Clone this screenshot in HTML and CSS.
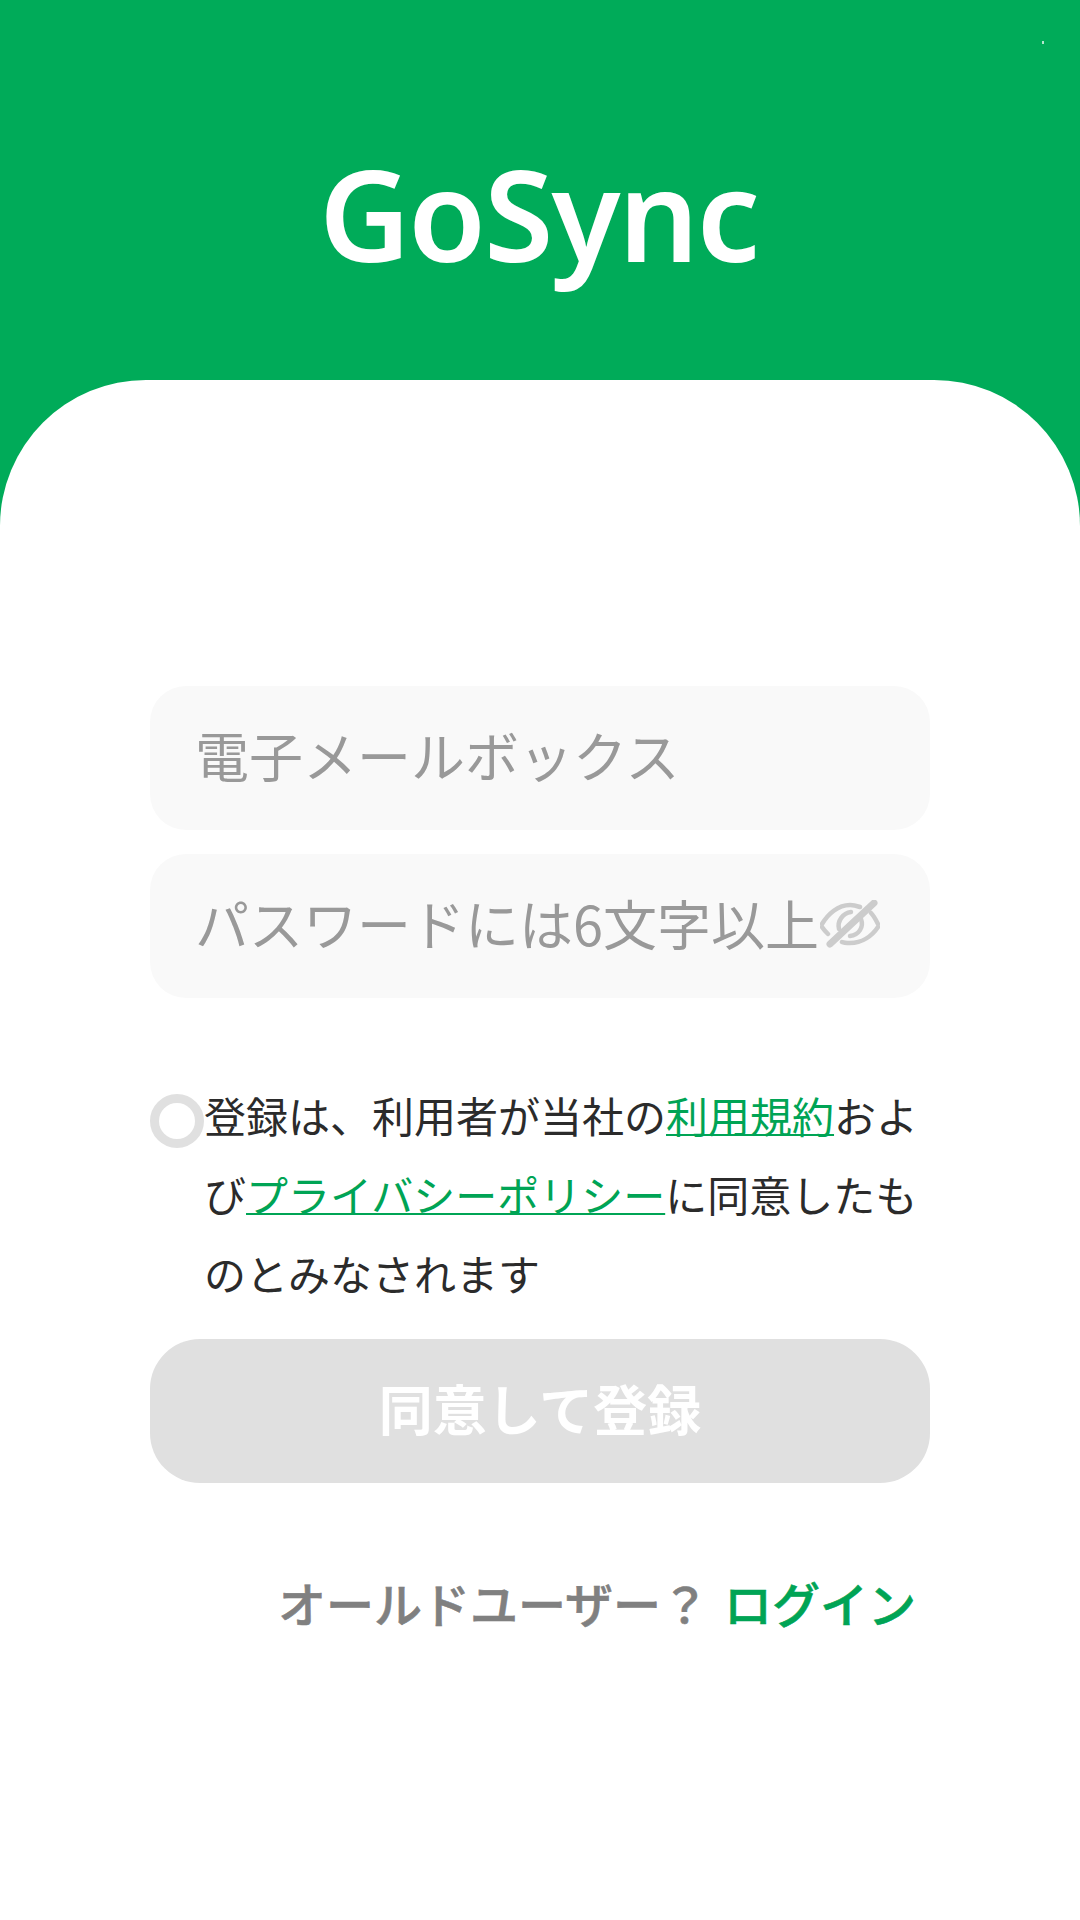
FILE: index.html
```html
<!DOCTYPE html>
<html lang="ja">
<head>
    <meta charset="UTF-8">
    <meta name="viewport" content="width=device-width, initial-scale=1.0">
    <title>GoSync</title>
    <link rel="stylesheet" href="styles.css">
</head>
<body>
<div class="header">
    <span class="status-dot"></span>
    <div class="logo">GoSync</div>
</div>
<div class="sheet">
    <div class="field"><span class="placeholder">電子メールボックス</span></div>
    <div class="field">
        <span class="placeholder">パスワードには6文字以上</span>
        <svg class="eye" width="60" height="48" viewBox="0 0 60 48" fill="none" stroke="#ccc" stroke-width="4.5" stroke-linecap="round">
            <path d="M2 24C8 14 18 5 30 5C34 5 37 6 40 7"/>
            <path d="M51 13C54 16 56 20 58 24"/>
            <path d="M2 27C4 30 6 32 8 34"/>
            <path d="M22 42C24 43 27 43 30 43C42 43 52 36 58 27"/>
            <path d="M19 29C17 21 23 13 31 12"/>
            <path d="M41 19C44 27 39 35 30 36"/>
            <path d="M10 44L54 3" stroke-width="7"/>
        </svg>
    </div>
    <div class="terms">
        <span class="check"></span>
        <p class="terms-text">登録は、利用者が当社の<a href="#">利用規約</a>および<a href="#">プライバシーポリシー</a>に同意したものとみなされます</p>
    </div>
    <button class="submit"><span class="submit-label">同意して登録</span></button>
    <div class="login-row">オールドユーザー？<a href="#">ログイン</a></div>
</div>
</body>
</html>
```

FILE: styles.css
```css
body {
    margin: 0;
    width: 1080px;
    height: 1920px;
    overflow: hidden;
    background-color: #00ab59;
    font-family: "Noto Sans CJK JP", "Noto Sans", sans-serif;
}

.header {
    position: relative;
    height: 380px;
    display: flex;
    justify-content: center;
    box-sizing: border-box;
    padding-top: 128px;
}

.status-dot {
    position: absolute;
    top: 41px;
    left: 1042px;
    width: 2px;
    height: 3px;
    background-color: #b5e6ce;
}

.logo {
    margin-right: 3px;
    font-family: "Noto Sans", sans-serif;
    font-size: 126px;
    font-weight: 600;
    line-height: 170px;
    letter-spacing: -2px;
    color: white;
}

.sheet {
    height: 1540px;
    box-sizing: border-box;
    padding: 306px 150px 0;
    background-color: white;
    border-radius: 146px 146px 0 0;
}

.field {
    height: 144px;
    margin-bottom: 24px;
    padding: 0 50px 0 45px;
    display: flex;
    align-items: center;
    justify-content: space-between;
    background-color: #f9f9f9;
    border-radius: 36px;
}

.placeholder {
    margin-bottom: 8px;
    font-size: 54px;
    color: #999;
    white-space: nowrap;
}

.eye {
    flex-shrink: 0;
    margin-bottom: 4px;
}

.terms {
    display: flex;
    margin-top: 77px;
}

.check {
    flex-shrink: 0;
    width: 54px;
    height: 54px;
    margin-top: 19px;
    box-sizing: border-box;
    border: 9px solid #e0e0e0;
    border-radius: 50%;
}

.terms-text {
    margin: 0;
    font-size: 42px;
    line-height: 79px;
    color: #2b2b2b;
}

.terms-text a {
    color: #00a455;
    text-decoration-thickness: 2px;
}

.submit {
    display: block;
    width: 100%;
    height: 144px;
    margin-top: 27px;
    padding: 0;
    border: none;
    border-radius: 50px;
    background-color: #e0e0e0;
    color: white;
    font-family: inherit;
    font-size: 54px;
    font-weight: 700;
}

.submit-label {
    display: block;
    margin-bottom: 8px;
}

.login-row {
    margin-top: 84px;
    padding-right: 14px;
    text-align: right;
    font-size: 48px;
    font-weight: 500;
    -webkit-text-stroke: 0.6px;
    color: #808080;
}

.login-row a {
    margin-left: 15px;
    color: #00a455;
    text-decoration: none;
}
```
